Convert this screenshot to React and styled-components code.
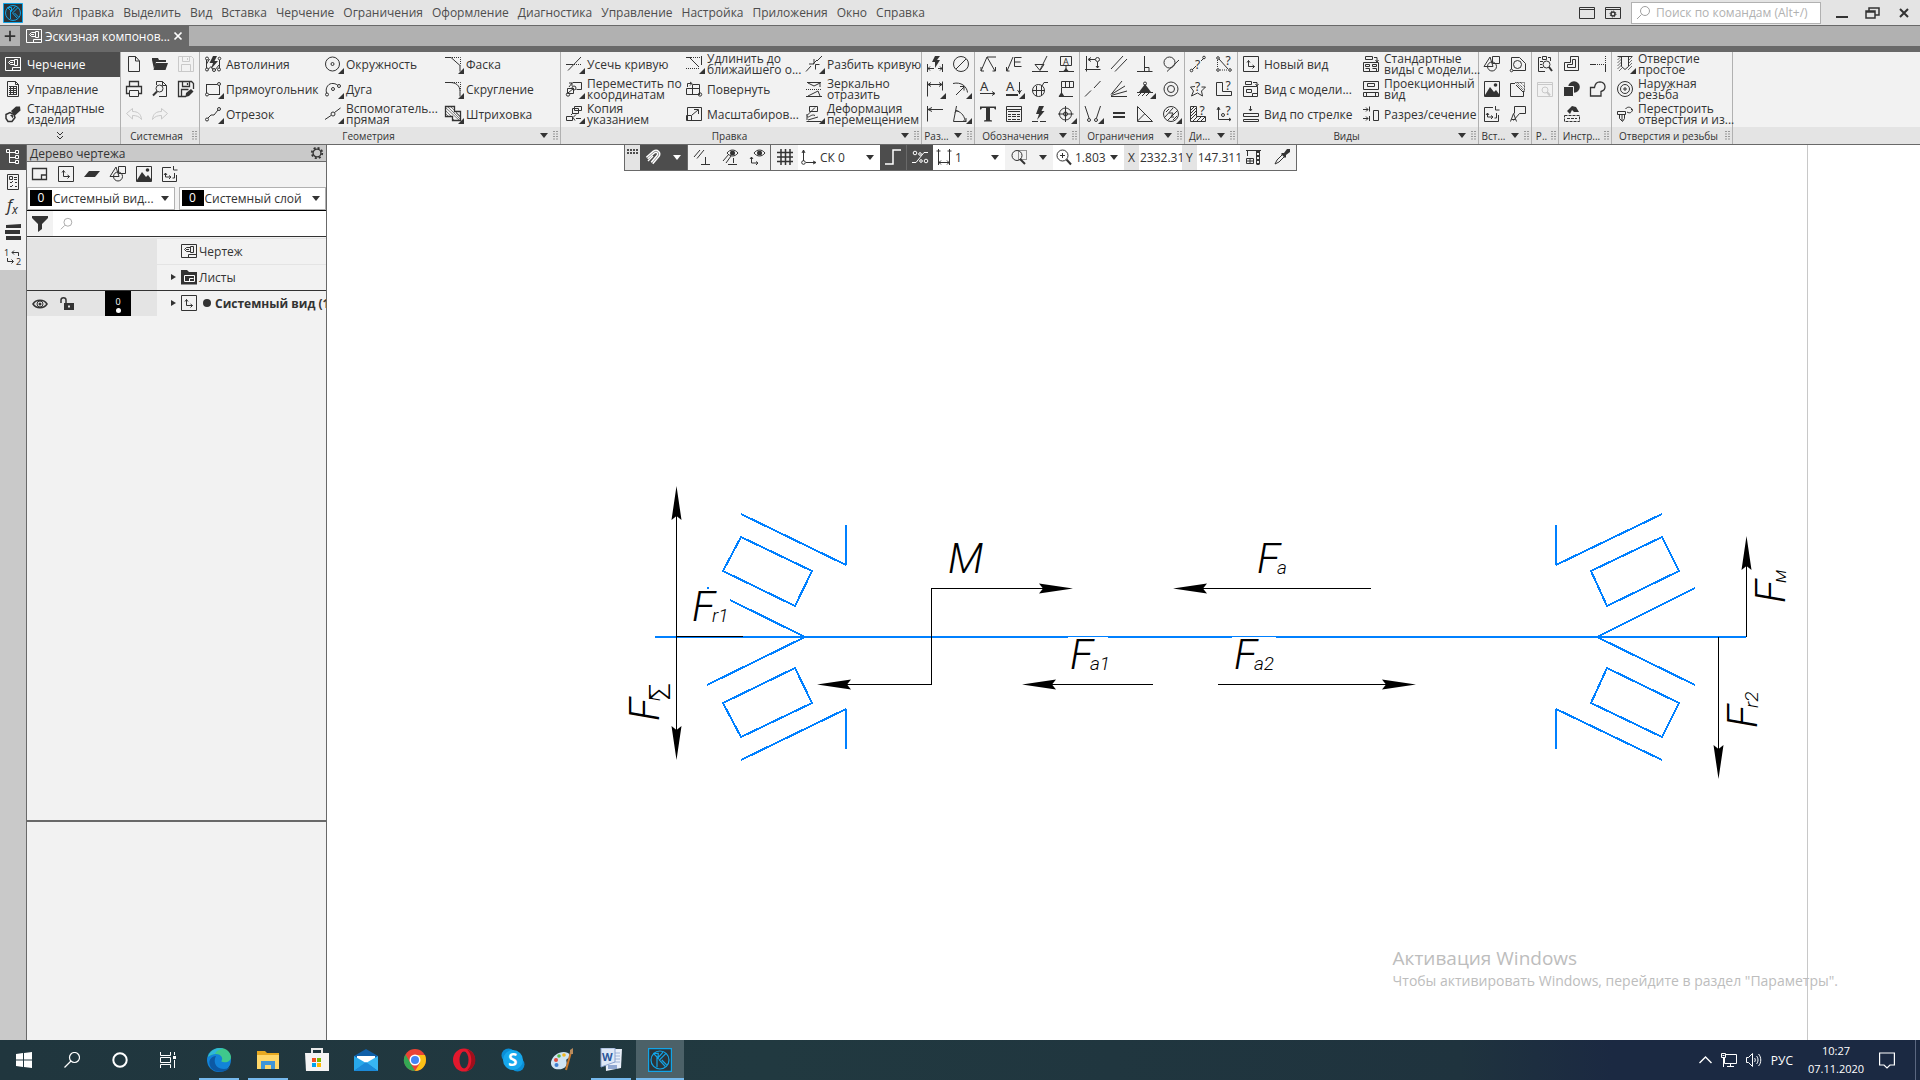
import { useState } from 'react';
import styled, { createGlobalStyle, css } from 'styled-components';

const solid = { fill: 'currentColor', stroke: 'none' };
const dash = { strokeDasharray: '1 1' };
const glyph = { fill: 'currentColor', stroke: 'none', fontFamily: 'Noto Sans, sans-serif' };

const icons = {
  drawing: (
    <>
      <path d="M.5 1.500h15v13H.5zM7.500 14.500v-3h8M9.500 3.500h3v6h-3zM9.500 4.500h-4l-2 2 2 2h4" />
      <path d="M5 6.500h3" />
    </>
  ),
  manage: (
    <>
      <path d="M2.500.5h8l3 3v12h-11zM10.500.5v3h3" />
      <path d="M4 5.500h8M4 7.500h8M4 9.500h8M4 11.500h8M4 13.500h8M5.500 5v9M8.500 5v9M11.500 5v9" />
    </>
  ),
  bolt: (
    <>
      <path strokeWidth="1.500" d="M1 8.500l4-2 4 2 1 3-3 4h-4l-2-3z" />
      <path {...solid} d="M6 5l5-4.500 4 0 .5 4-6 5.500-2-3zM5 9.500l2-1 1.500 1.500-1 2.500-1-2z" />
    </>
  ),
  newFile: <path d="M2.500.5h7l4 4.500v10.500h-11zM9.500.5v4.500h4" />,
  open: (
    <>
      <path {...solid} d="M0 2h6l1 2h7v2H4l-2 7-2-9z" />
      <path {...solid} d="M3.500 7H16l-2.500 7H1.500z" />
    </>
  ),
  save: <path d="M.5.5h13l2 2v13H.5zM4.500.5v5h7v-5M9.500 2v2M3.500 15.500v-7h9v7" />,
  print: (
    <>
      <path strokeWidth="1.300" d="M3.500 5V.5h9V5M3.500 12.500h-3v-7h15v7h-3" />
      <path d="M3.500 9.500h9v6h-9z" />
    </>
  ),
  preview: (
    <>
      <path d="M4.500 4V.5h6l4 4v11H7M10.500.5v4h4" />
      <circle cx="7.500" cy="7.500" r="3.500" />
      <path strokeWidth="2" d="M5 10.500l-4 4" />
    </>
  ),
  saveAs: (
    <>
      <path strokeWidth="1.300" d="M8 15.500H.5V.5h13l2 2V8M4.500.5v5h7v-5M9.500 2v2M3.500 15.500v-7h7" />
      <path {...solid} d="M8 12l5-4 2.500 2.500L11 15l-3.500 1z" />
    </>
  ),
  undo: <path d="M6.500 2.500v3c5 0 8.500 2 9 8-2-3-5-4-9-4v3.500L.5 7.500z" />,
  redo: <path d="M9.500 2.500v3c-5 0-8.500 2-9 8 2-3 5-4 9-4v3.500l6-5.500z" />,
  autoLine: (
    <>
      <path d="M1.500 4v8M1.500 8l3-5M3 13.500l3-3 2 3M14.500 4v8M10 14l4-5" />
      <circle cx="2" cy="2.500" r="1.500" />
      <circle cx="2" cy="13.500" r="1.500" />
      <circle cx="14" cy="13.500" r="1.500" />
      <circle cx="9" cy="14" r="1.500" />
      <circle cx="14.500" cy="2.500" r="1.300" />
      <path {...solid} d="M8 0h4L9.500 5H13l-7 8 2-6H4.500z" />
    </>
  ),
  rect: (
    <>
      <path d="M1 3.500h11M1.500 4v8M14.500 5v9M4 13.500h10" />
      <circle cx="14" cy="3" r="1.500" />
      <circle cx="2" cy="13.500" r="1.500" />
    </>
  ),
  segment: (
    <>
      <path d="M3 12l3-3h3l4-5" />
      <circle cx="14" cy="3" r="1.500" />
      <circle cx="2" cy="13.500" r="1.500" />
    </>
  ),
  circle: (
    <>
      <circle cx="7.500" cy="8" r="7" />
      <circle cx="7.500" cy="8" r="1.500" />
    </>
  ),
  arc: (
    <>
      <path d="M1.500 12C0 6 4 2 8 2.500c3 0 4 1.500 5 2" />
      <circle cx="8" cy="8" r="1.500" />
      <circle cx="2" cy="13.500" r="1.500" />
      <circle cx="14" cy="5" r="1.500" />
    </>
  ),
  auxLine: (
    <>
      <path d="M0 13.500l6-4M9.500 6.500L15.500 2" />
      <circle cx="8" cy="8" r="2" />
    </>
  ),
  chamfer: (
    <>
      <path d="M0 1.500h6l9 8v6" />
      <path {...dash} d="M7 1.500h8.500v8" />
    </>
  ),
  fillet: (
    <>
      <path d="M0 1.500h5c6 0 10 3 10 9v5" />
      <path {...dash} d="M7 1.500h8.500v8" />
    </>
  ),
  hatch: (
    <>
      <path strokeWidth="1.300" d="M.5.500h9v5h6v9h-8v-4h-7z" />
      <path strokeWidth=".6" d="M1 2l13 12M1 5l5 5M3 1l12 12M6 1l9 9M1 8l2 2M8 13l1 1M11 7l4 4" />
    </>
  ),
  trim: (
    <>
      <path d="M0 8.500h7M2 14.500L15 1" />
      <path {...dash} d="M8 8.500h8" />
    </>
  ),
  moveBy: (
    <>
      <path d="M6.500 1.500h9v7h-5M1.500 7.500h6v5h-6zM2 12l6-5M3 6l3-4M3 2h3v3" />
      <circle cx="2" cy="13.500" r="1.700" />
      <circle cx="8" cy="7" r="2" />
    </>
  ),
  copyBy: <path d="M8.500.500h7v4h-7zM6.500 2.500h6v5h-6zM.5 10.500h6v4h-6zM5 9l2-2M9 14.500l-2-3 3-3M10 12.500h5" />,
  extend: (
    <>
      <path d="M0 1.500h5M15.500 0v9M4 2l9 9" />
      <path {...dash} d="M5 1.500h10M0 12.500h13" />
    </>
  ),
  rotate: (
    <>
      <path d="M6.500 3.500h7v10h-7zM.5 7.500h13v6H.5M.5 7.500v6M1.500 6v-3.500h4M4 1l2 1.500-2 2" />
      <circle cx="14" cy="13.500" r="1.700" />
    </>
  ),
  scale: (
    <>
      <path d="M1.500 1.500h14v13h-14z" />
      <path d="M.5 9.500h5v5h-5zM6 9l6-5M8 3.500h4.500v4.500" />
    </>
  ),
  split: <path d="M0 15.500L5 10M11 5l5-5M3 8h5M8 3v5M7 8l4-4M9.500 13.500v-5h4" />,
  mirror: (
    <>
      <path d="M1 1.500h14M0 15.500h16M2 2l6 3 6-3v4M2 15l10-5 2 5" />
      <path {...dash} d="M0 8.500h16" />
    </>
  ),
  deform: (
    <>
      <path d="M3.500.5h8v5h-8zM1 9.500l8-8M1 10.500c2 2 4-3 8-1M.5 15.500h15M2 14l10-3" />
      <path d="M1 8v6" />
    </>
  ),
  autoDim: (
    <>
      <path d="M.5 8v8M15.500 8v8M1 12.500h6M11 12.500h4M3 10.500l-2 2 2 2M13 10.500l2 2-2 2" />
      <path {...solid} d="M8 0h5l-3 4h3l-5 8 0-6H5z" />
    </>
  ),
  diameter: (
    <>
      <circle cx="8" cy="8" r="7.500" />
      <path d="M3 13L13 3" />
    </>
  ),
  linearDim: <path d="M.5.500v15M15.500.500v9M1 3.500h14M4 1.500l-3 2 3 2M12 1.500l3 2-3 2" />,
  radialDim: <path d="M0 2.500c8-2 14 3 14.500 9M3 14l8-8M7 5.500h4v4" />,
  baseDim: <path d="M.5 0v15.500M1 3.500h15M5 1.500l-4 2 4 2" />,
  angleDim: <path d="M3.500 0L.5 15.500h13M3 5c4 0 8 4 9 9M2 6.500l1-2 3 1M13 12v3h-3" />,
  leader: <path d="M1 15l6-14h9M7 1l8 14M1 11v4h3M15.500 11v4h-3" />,
  leaderE: <path d="M1 15l6-14M.5 11v4h3M8.500 1.500h7M8.500 6h6M8.500 10.500h7M8.500 1.500v9" />,
  rough: <path d="M0 15.500h16M3 8.500h9l-4 6-5-6M8 14l7-14" />,
  datum: (
    <>
      <path d="M2.500.5h11v9h-11zM8 9.500v5M1 15.500h15" />
      <path {...solid} d="M8 12l3 3.500H5z" />
      <text {...glyph} x="5" y="8.500" fontSize="9">A</text>
    </>
  ),
  viewA: (
    <>
      <text {...glyph} x="0" y="10" fontSize="13">A</text>
      <path d="M0 12.500h15M12 10.500l3 2-3 2" />
    </>
  ),
  sectionA: (
    <>
      <text {...glyph} x="0" y="10" fontSize="13">A</text>
      <path strokeWidth="2" d="M0 14h12" />
      <path d="M13.500 1v12M11.500 9l2 3 2-3" />
    </>
  ),
  detail: (
    <>
      <circle cx="6.500" cy="9.500" r="6" />
      <path d="M4.500 5v10M9.500 5v10M0 9.500h13M10 5l2-3.500h4" />
    </>
  ),
  tolFrame: (
    <>
      <path d="M3.500.500h12v6h-12zM7.500 1v6M11.500 1v6M3.500 7v8M1 15.500h14" />
      <path {...solid} d="M3.500 11l3 4.500h-6z" />
    </>
  ),
  text: <path {...solid} d="M0 .500h16v3h-1l-1-1.500h-4v12l2 .500v1H4v-1l2-.500V2H2L1 3.500H0z" />,
  table: <path d="M.5.500h15v15H.5zM.5 3.500h15M2 5.500h12M2 8.500h3M6 8.500h4M11 8.500h3M2 10.500h3M6 10.500h4M11 10.500h3M2 13.500h3M6 13.500h4M11 13.500h3" />,
  autoMark: (
    <>
      <path {...solid} d="M7 0h5L9.500 5h3L5 14l2-6H4z" />
      <path strokeDasharray="6 2" d="M0 15.500h16" />
    </>
  ),
  center: (
    <>
      <circle cx="7.500" cy="8" r="6" />
      <circle cx="7.500" cy="8" r="2" />
      <path d="M7.500 0v16M0 8h15.500" />
    </>
  ),
  alignPt: (
    <>
      <path d="M1.500 0v15.500M0 13.500h15.500M4 3.500h6M6 1.500l-3 2 3 2M12.500 6v6M11 10l1.500 2 1.500-2" />
      <circle cx="12.500" cy="3.500" r="2" />
    </>
  ),
  parallel: <path d="M0 13L12 0M4 15.500L16 3" />,
  perp: <path d="M7.500 0v15M0 15.500h15.500M8 11.500h4v4" />,
  tangent: (
    <>
      <circle cx="6.500" cy="6.500" r="5.500" />
      <path d="M4 15.500L16 4" />
    </>
  ),
  collinear: <path d="M0 15.500l6-6M9 7l6.500-7" />,
  angleC: <path d="M0 15.500h16M0 14.500L16 10M0 13.500L11 0M1 13l13-8" />,
  fix: (
    <>
      <circle cx="8" cy="2.500" r="1.500" />
      <path {...solid} d="M8 3l6 8H2z" />
      <path d="M0 11.500h16M1 15l3-3M5 15l3-3M9 15l3-3" />
    </>
  ),
  concentric: (
    <>
      <circle cx="8" cy="8" r="7" />
      <circle cx="8" cy="8" r="3.500" />
    </>
  ),
  symmetry: (
    <>
      <path d="M0 0l4 12M15.500 0l-4 12" />
      <circle cx="4" cy="14" r="1.500" />
      <circle cx="11" cy="14" r="1.500" />
    </>
  ),
  equal: <path strokeWidth="2" d="M2 7h12M2 11h12" />,
  triangle: <path d="M.5.500v15h15zM.5 15l7-7" />,
  equalR: (
    <>
      <circle cx="8" cy="8" r="7.500" />
      <path d="M2 11l8-9M5 14l9-9M3 6l3-3M10 14l4-4M6 7l4 0-2 4 3 0" />
    </>
  ),
  dist: (
    <>
      <path d="M2 14l4-4M11 5l3-3" />
      <circle cx="1.500" cy="14.500" r="1.300" />
      <circle cx="14" cy="1.500" r="1.300" />
      <text {...glyph} x="5" y="12.500" fontSize="12">?</text>
    </>
  ),
  nodes: (
    <>
      <path {...dash} d="M1.500 4v8M4 14h8" />
      <path d="M3 3l9 10" />
      <circle cx="2" cy="2" r="1.300" />
      <circle cx="2" cy="14" r="1.300" />
      <circle cx="14" cy="14" r="1.300" />
      <text {...glyph} x="9.500" y="9" fontSize="12">?</text>
    </>
  ),
  starQ: (
    <>
      <path d="M5 5.500L.5 6l3 4-2 5 6-3 5 3-1-5 4-4h-4" />
      <text {...glyph} x="5" y="10" fontSize="12">?</text>
    </>
  ),
  areaQ: (
    <>
      <path d="M.5 1.500h6v9h9v4H.5z" />
      <text {...glyph} x="9.500" y="9" fontSize="12">?</text>
    </>
  ),
  massQ: (
    <>
      <path d="M.5.500h6v10h9v5H.5zM1 4l3-3M1 7l5-5M1 10l5-5M1 13l5-5M3 15l4-4M7 15l4-4M11 15l4-4" />
      <text {...glyph} x="9.500" y="9" fontSize="12">?</text>
    </>
  ),
  inertiaQ: (
    <>
      <path d="M2.500 1v12.500H15M1 4l1.500-3L4 4M13 12l2 1.500-2 1.500" />
      <circle cx="7" cy="9" r="1.500" />
      <text {...glyph} x="9.500" y="9" fontSize="12">?</text>
    </>
  ),
  view: <path d="M.5.500h15v15H.5zM5.500 4.500v6h6M4 6.500l1.500-2 1.500 2M9.500 9l2 1.500-2 2" />,
  modelView: <path d="M2.500.5h6v3h-6zM.5 5.500h14v10H.5zM3.500 8.500h5v3h-5zM9.500 15.500v-3h5M10 1.500h4v3M12.500 3l1.500 2 1.500-2" />,
  arrowView: <path d="M7.500 0v5M6 3l1.500 2L9 3M.5 7.500h15v3H.5zM.5 13.500h15v2H.5z" />,
  stdViews: <path d="M2.500.5h7v3h-7zM.5 6.500h15v9H.5zM2.500 8.500h4v2h-4zM9.500 8.500h4v2h-4zM2.500 12.500h4v3M9.500 12.500h4v3M11 1.500h3v4M12.500 4l1.500 2 1.500-2" />,
  projView: <path d="M.5.500h15v8H.5zM4.500 2.500h7v3h-7zM.5 11.500h15v4H.5zM3.500 11v4M12.500 11v4" />,
  cutView: <path d="M0 3.500h5M3 1.500l2 2-2 2M6.500.5v5M0 12.500h5M3 10.500l2 2-2 2M6.500 10v5M10.500 4.500h5v10h-5z" />,
  shapes: (
    <>
      <path d="M8.500.500h7v7h-7zM0 10.500L6 1l3 9.500z" />
      <circle cx="8" cy="10.500" r="4.500" />
    </>
  ),
  fragment: (
    <>
      <path d="M1.500 13V1.500h8l6 6v7H3" />
      <circle cx="7.500" cy="8.500" r="4" />
      <circle cx="1.500" cy="14.500" r="1.300" />
    </>
  ),
  image: (
    <>
      <path d="M.5.500h15v15H.5z" />
      <path {...solid} d="M1 14l5-8 4 5 2-2 3 4v2H1z" />
      <circle {...solid} cx="11.500" cy="4" r="1.800" />
    </>
  ),
  imageClip: (
    <>
      <path d="M5 2.500H.5v13h13V10M6 4l7 7" />
      <path {...dash} d="M5.500 1.500h9v9zM7 1l8 8M10 1l5 5" />
    </>
  ),
  docView: <path d="M9 1.500H.5v14h14V9M11.500 0v4h4M3.500 7v4h5M2 9l1.500-2L5 9M7 9.500l2 1.500-2 2M12.500 7v5h-2" />,
  callout: <path d="M4.500.5h11v7h-6l-6 7M4.500 7.500v-7M.5 15.500l3-8 3 8M1.500 13.500h4" />,
  report: (
    <>
      <path d="M4 1.500H1.500v14H8M11 1.500h2.500V5M5.500.5h4v3h-4zM3 5.500h3M3 8.500h2M3 11.500h3" />
      <circle cx="9.500" cy="8.500" r="3.500" />
      <path strokeWidth="2" d="M12 11l3 4" />
    </>
  ),
  findWin: (
    <>
      <path d="M.5 1.500h15v14H.5zM.5 3.500h15" />
      <circle cx="8" cy="9" r="3" />
      <path strokeWidth="2" d="M10 11l3 3.500" />
    </>
  ),
  contour: <path d="M6.500.5h8v14h-14v-8h6zM8.500 3.500h3v8h-8v-3h5z" />,
  limit: (
    <>
      <path d="M0 8.500h6M15.500 8v8" />
      <path {...dash} d="M7 8.500h8M15.500 0v8" />
    </>
  ),
  boolAdd: (
    <>
      <circle {...solid} cx="10" cy="6" r="5.800" />
      <path {...solid} stroke="#f2f2f2" d="M-.5 5.500h10v10H-.5z" />
    </>
  ),
  boolMerge: <path strokeWidth="1.300" d="M.5 15v-8.500h4C5 3 7 .8 10 .8c6 .5 7 8.200 1 9.700v4.500z" />,
  measure: (
    <>
      <path {...solid} d="M3 5l5-5 4 1 3 5-5 0-2-2-2 4z" />
      <path strokeDasharray="3 1" d="M.5 9.500h15v6H.5zM3 12.500h10" />
    </>
  ),
  hole: (
    <>
      <path d="M4.500.5h7v10l-3.500 3-3.500-3zM.5.500h15" />
      <path strokeWidth=".7" d="M.5 4l3-3M.5 7l4-4M.5 10l4-4M.5 13l4-4M2 15l3-3M12 4l3-3M12 7l3-3M12 10l3-3M11 14l4-4" />
    </>
  ),
  thread: (
    <>
      <circle cx="8" cy="8" r="7.500" />
      <circle cx="8" cy="8" r="4.500" />
      <path d="M6 8h4M8 6v4" />
    </>
  ),
  rebuild: <path d="M.5 5.500h8v3h-8zM2.500 8.500v4l3 3 2-3v-4M5 9v6M8.500 3c2-3 6-2 7 1M10 6c3 2 5 0 5.500-2M14 3l1.500 1.500" />,
  layout: <path strokeWidth="1.300" d="M.5 2.500h14v11H.5zM9.500 13v-4h5" />,
  layer: <path {...solid} d="M5 5h11l-5 6H0z" />,
  treeIcon: (
    <>
      <path d="M4.500 3v11M5 3.500h5M5 8.500h5M5 13.500h5" />
      <path d="M1.500.5h3v3h-3zM10.500 1.500h3v3h-3zM10.500 6.500h3v3h-3zM10.500 11.500h3v3h-3z" />
    </>
  ),
  params: <path d="M2.500.500h11v15h-11zM4.500 2.500h3v3h-3zM5 8l1 1 2-2M5 12l1 1 2-2M9 3.500h3M9 5.500h3M10 8.500h2M10 12.500h2" />,
  fx: (
    <text fill="currentColor" stroke="none" fontFamily="Noto Sans, sans-serif" fontStyle="italic" fontSize="16" x="2" y="12">
      f<tspan fontSize="12" dy="3">x</tspan>
    </text>
  ),
  bars: <path {...solid} d="M1 1l15-1v4L1 4zM0 6h15v4H0zM1 12h15v4H1z" />,
  swap: (
    <>
      <text {...glyph} x="-1" y="7" fontSize="9">1</text>
      <text {...glyph} x="11" y="16" fontSize="9">2</text>
      <path d="M13.500 7V3.500H7M9 1.500l-2 2 2 2M2.500 9v3.500H8M6.500 10.500l2 2-2 2" />
    </>
  ),
  funnel: <path {...solid} d="M0 0h16v2l-6 6v5l-4 3V8L0 2z" />,
  search: (
    <>
      <circle cx="9" cy="6" r="4.500" />
      <path d="M5.500 9.500L1 14" />
    </>
  ),
  sheets: (
    <>
      <path {...solid} d="M0 1h6l2 2h8v12.500H0z" />
      <path stroke="#fff" d="M3.500 6.500h10v6h-10zM8.500 9.500h4M8.500 9.500v3" />
    </>
  ),
  eye: (
    <>
      <path strokeWidth="1.500" d="M1 8c3-5 11-5 14 0-3 5-11 5-14 0z" />
      <circle cx="8" cy="8" r="3" />
      <circle {...solid} cx="8" cy="8" r="1.500" />
    </>
  ),
  unlock: (
    <>
      <path strokeWidth="1.500" d="M2 7V4c0-3 5-3 5 0v4" />
      <path {...solid} fillRule="evenodd" d="M5 7h10v7H5zM9 9.500v2h2v-2z" />
    </>
  ),
  gear: (
    <>
      <circle cx="8" cy="8" r="4.500" strokeWidth="1.500" />
      <circle cx="8" cy="8" r="6" strokeWidth="2" strokeDasharray="2.400 2.300" />
    </>
  ),
  magnet: (
    <>
      <path strokeWidth="3.500" d="M2 9l7-6c3-2 6 1 4 4l-6 7" />
      <path stroke="#777" strokeWidth=".8" d="M2 9l7-6c3-2 6 1 4 4l-6 7" />
      <path strokeWidth="1.500" d="M3 12l5-5" />
    </>
  ),
  snapPerp: <path d="M0 8l6-7M3 9.500L10 1M11.500 8v7M7 15.500h9" />,
  snapEye: (
    <>
      <path d="M1 12l6-7M4 14l5-7M11.500 9v5M6 15.500h9M5 4c3-4 8-4 11 0-3 4-8 4-11 0z" />
      <circle {...solid} cx="10.500" cy="4" r="2.500" />
    </>
  ),
  axesEye: (
    <>
      <path d="M2.500 8v6h6M1 10l1.500-2L4 10M7 12.500l2 1.500-2 2M5 4c3-4 8-4 11 0-3 4-8 4-11 0z" />
      <circle {...solid} cx="10.500" cy="4" r="2.500" />
    </>
  ),
  grid: <path strokeWidth="1.500" d="M4 0v16M8.500 0v16M13 0v16M0 3.500h16M0 8h16M0 12.500h16" />,
  axes: (
    <>
      <path d="M2.500 12V1M5 13.500h10M1 4l1.500-3L4 4M12 12l3 1.500-3 1.500" />
      <circle cx="2.500" cy="13.500" r="1.800" />
    </>
  ),
  step: <path strokeWidth="1.500" d="M0 15h8V1h8" />,
  nodeSnap: (
    <>
      <path d="M0 13.500h4l8-10h4" />
      <circle cx="3" cy="4" r="1.800" />
      <circle cx="8" cy="5" r="1.300" />
      <circle cx="9" cy="12" r="1.300" />
      <circle cx="14" cy="12" r="1.800" />
    </>
  ),
  stepDim: <path d="M2.500 4v12M13.500 4v12M3 13.500h10M5 11.500l-2 2 2 2M11 11.500l2 2-2 2M2.500 0v4M.5 2h4M13.500 0v4M11.500 2h4" />,
  zoomArea: (
    <>
      <path {...dash} d="M7.500 1.500h8v9h-8z" />
      <circle cx="6" cy="6.500" r="5" />
      <path strokeWidth="2" d="M9 10l5 5" />
    </>
  ),
  zoomIn: (
    <>
      <circle cx="6.500" cy="6.500" r="5.500" />
      <path strokeWidth="2" d="M10.500 10.500l4.500 5" />
      <path d="M4 6.500h5M6.500 4v5" />
    </>
  ),
  coords: (
    <>
      <path d="M0 1.500h15M1.500 2v5M10.500 2v13.500M13.500 2v13.500M.5 9.500h7v5h-7zM.5 12h7M4 9.500v5" />
      <path strokeWidth="2" strokeDasharray="2 2" d="M12 2v14" />
    </>
  ),
  pipette: (
    <>
      <path d="M1 15l2-4 6-6 2 2-6 6z" />
      <path {...solid} d="M8 4l2 0 3-4 3 0 0 3-4 3 0 2-1 1-4-4z" />
    </>
  ),
  windowBox: <path d="M.5 2.500h15v11H.5zM1 4.500h14" />,
  windowGear: (
    <>
      <path d="M.5 2.500h15v11H.5zM1 4.500h14" />
      <circle cx="8" cy="9" r="2" strokeWidth="1.500" />
      <circle cx="8" cy="9" r="3" strokeDasharray="1 1.350" />
    </>
  ),
  minimize: <path strokeWidth="2" d="M2 12h12" />,
  restore: <path strokeWidth="1.500" d="M1 6h9v7H1zM4 6V3h10v7h-4M1 7h9" />,
  close: <path strokeWidth="2" d="M4 4l8 8M12 4l-8 8" />,
  plus: <path strokeWidth="2" d="M8 2v12M2 8h12" />,
  more: <path d="M5 4l3 3 3-3M5 8l3 3 3-3" />,
};

const Icon = ({ name, size = 16 }) => (
  <Svg width={size} height={size} viewBox="0 0 16 16" aria-hidden="true">
    {icons[name]}
  </Svg>
);

const Grip = () => (
  <svg width="5" height="9" viewBox="0 0 5 9" aria-hidden="true">
    <path d="M1 0v9M4 0v9" stroke="#4d4d4d" strokeWidth="1" strokeDasharray="1 1.500" />
  </svg>
);

const menu = [
  'Файл', 'Правка', 'Выделить', 'Вид', 'Вставка', 'Черчение', 'Ограничения', 'Оформление',
  'Диагностика', 'Управление', 'Настройка', 'Приложения', 'Окно', 'Справка',
];

const modes = [
  { icon: 'drawing', text: 'Черчение' },
  { icon: 'manage', text: 'Управление' },
  { icon: 'bolt', text: 'Стандартные изделия' },
];

// tools go column by column, three in each: [icon, label, has submenu, disabled]
const groups = [
  {
    title: 'Системная',
    tools: [
      ['newFile'], ['print'], ['undo', '', 0, 1],
      ['open'], ['preview'], ['redo', '', 0, 1],
      ['save', '', 0, 1], ['saveAs'],
    ],
  },
  {
    title: 'Геометрия', wide: true, more: true,
    tools: [
      ['autoLine', 'Автолиния'], ['rect', 'Прямоугольник', 1], ['segment', 'Отрезок', 1],
      ['circle', 'Окружность', 1], ['arc', 'Дуга', 1], ['auxLine', 'Вспомогатель...\nпрямая', 1],
      ['chamfer', 'Фаска', 1], ['fillet', 'Скругление', 1], ['hatch', 'Штриховка', 1],
    ],
  },
  {
    title: 'Правка', wide: true, more: true,
    tools: [
      ['trim', 'Усечь кривую', 1], ['moveBy', 'Переместить по\nкоординатам', 1], ['copyBy', 'Копия\nуказанием', 1],
      ['extend', 'Удлинить до\nближайшего о...', 1], ['rotate', 'Повернуть'], ['scale', 'Масштабиров...'],
      ['split', 'Разбить кривую', 1], ['mirror', 'Зеркально\nотразить'], ['deform', 'Деформация\nперемещением', 1],
    ],
  },
  {
    title: 'Раз...', more: true,
    tools: [['autoDim'], ['linearDim', '', 1], ['baseDim'], ['diameter'], ['radialDim', '', 1], ['angleDim', '', 1]],
  },
  {
    title: 'Обозначения', more: true,
    tools: [
      ['leader'], ['viewA'], ['text'], ['leaderE'], ['sectionA', '', 1], ['table'],
      ['rough'], ['detail'], ['autoMark'], ['datum'], ['tolFrame'], ['center', '', 1],
    ],
  },
  {
    title: 'Ограничения', more: true,
    tools: [
      ['alignPt'], ['collinear'], ['symmetry', '', 1], ['parallel'], ['angleC'], ['equal'],
      ['perp'], ['fix', '', 1], ['triangle'], ['tangent'], ['concentric'], ['equalR', '', 1],
    ],
  },
  {
    title: 'Ди...', more: true,
    tools: [['dist'], ['starQ'], ['massQ'], ['nodes'], ['areaQ'], ['inertiaQ']],
  },
  {
    title: 'Виды', wide: true, more: true,
    tools: [
      ['view', 'Новый вид'], ['modelView', 'Вид с модели...'], ['arrowView', 'Вид по стрелке'],
      ['stdViews', 'Стандартные\nвиды с модели...'], ['projView', 'Проекционный\nвид'], ['cutView', 'Разрез/сечение'],
    ],
  },
  {
    title: 'Вст...', more: true,
    tools: [['shapes'], ['image'], ['docView'], ['fragment'], ['imageClip'], ['callout']],
  },
  { title: 'Р..', tools: [['report'], ['findWin', '', 0, 1]] },
  { title: 'Инстр...', tools: [['contour'], ['boolAdd'], ['measure'], ['limit'], ['boolMerge']] },
  {
    title: 'Отверстия и резьбы', wide: true,
    tools: [['hole', 'Отверстие\nпростое', 1], ['thread', 'Наружная\nрезьба'], ['rebuild', 'Перестроить\nотверстия и из...']],
  },
];

const head = { up: -90, down: 90, left: 180, right: 0 };

const Arrow = ({ x, y, dir }) => (
  <path d="M0 0L-34-5l4 5-4 5z" transform={`translate(${x} ${y}) rotate(${head[dir]})`} fill="#000" stroke="none" />
);

const Force = ({ x, y, name = 'F', sub, turned }) => (
  <Label transform={`translate(${x} ${y})${turned ? ' rotate(-90)' : ''}`}>
    {name}
    {sub && <Sub dx="-3" dy="1">{sub}</Sub>}
  </Label>
);

const Drawing = () => (
  <Sheet viewBox="327 145 1593 895" preserveAspectRatio="xMinYMin meet" role="img" aria-label="Эскизная компоновка">
    <path d="M1807.500 145v895" stroke="#c8c8c8" />
    <g stroke="#0080ff" strokeWidth="2" strokeLinejoin="bevel" shapeRendering="crispEdges">
      <path d="M655 637H1746" />
      <path d="M741 514l105 51V525M741 537l71 34-17 35-72-35zM730 600l75 37-98 48M707 588h2" />
      <path d="M741 760l105-51v40M741 737l71-34-17-35-72 35z" />
      <path d="M1662 514l-106 51V525M1662 537l17 34-72 35-16-35zM1695 588l-98 49 98 48" />
      <path d="M1662 760l-106-51v40M1662 737l17-34-72-35-16 35z" />
    </g>
    <path d="M1068 637.500h40M1232 637.500h44" stroke="#fff" />
    <g stroke="#000" shapeRendering="crispEdges">
      <path d="M676.500 500v246M676 636.500h67M932 684.500h-90M931.500 685V588.500H1050M1040 684.500h113" />
      <path d="M1190 588.500h181M1218 684.500h180M1746.500 637V560M1718.500 637v120" />
    </g>
    <Arrow x={676.5} y={486} dir="up" />
    <Arrow x={676.5} y={760} dir="down" />
    <Arrow x={1073} y={588.5} dir="right" />
    <Arrow x={817} y={684.5} dir="left" />
    <Arrow x={1022} y={684.5} dir="left" />
    <Arrow x={1173} y={588.5} dir="left" />
    <Arrow x={1416} y={684.5} dir="right" />
    <Arrow x={1746.5} y={536} dir="up" />
    <Arrow x={1718.5} y={779} dir="down" />
    <Force x={692} y={621} sub="r1" />
    <Force x={948} y={573} name="M" />
    <Force x={1070} y={669} sub="a1" />
    <Force x={1257} y={573} sub="a" />
    <Force x={1234} y={669} sub="a2" />
    <Force x={659} y={721} sub="r" turned />
    <Sigma transform="translate(670 700) rotate(-90)">Σ</Sigma>
    <Force x={1785} y={603} sub="м" turned />
    <Force x={1757} y={728} sub="r2" turned />
  </Sheet>
);

const KompasLogo = ({ size }) => (
  <svg width={size} height={size} viewBox="0 0 20 20" aria-hidden="true">
    <path d="M.5.500h19v19H.5z" fill="#2b3338" stroke="#12a5e8" />
    <g fill="none" stroke="#12a5e8">
      <circle cx="10" cy="10" r="7.500" />
      <path d="M4.500 4.500h4v4l-4-4M7.500 16V8M15 4.500L9.500 10l5 5.500M12.500 3.500L8.500 8M11.500 10l4 4" />
    </g>
  </svg>
);

const apps = [
  {
    name: 'Edge', running: true,
    art: (
      <>
        <circle cx="12" cy="12" r="12" fill="#1283d8" />
        <path d="M1 9C3 2 9 0 13 0c7 0 11 5 11 9 0 4-4 6-8 5-2 0-2-1-1-2 1-3-2-6-6-6-4 0-7 2-8 3z" fill="#3fc88c" />
        <path d="M1 9C4 1 12-1 17 1 12 1 9 3 8 6 5 6 2 7 1 9z" fill="#2fb7dc" />
        <path d="M9 8c-3 5-1 13 8 13 3 0 4-1 6-2-4 6-13 6-18 2C1 17 1 9 9 8z" fill="#0c59a4" />
      </>
    ),
  },
  {
    name: 'Проводник', running: true,
    art: (
      <>
        <path d="M1 3h8l2 2h12v15H1z" fill="#e7a921" />
        <path d="M1 7h22v14H1z" fill="#ffd769" />
        <path d="M5 13h14v8h-4v-4H9v4H5z" fill="#3f95d8" />
      </>
    ),
  },
  {
    name: 'Магазин',
    art: (
      <>
        <path d="M7 6V1h10v5" fill="none" stroke="#e8e8e8" strokeWidth="2" />
        <path d="M0 5h24v18H1z" fill="#f4f4f4" />
        <path d="M7 10h4v4H7z" fill="#f25022" />
        <path d="M12 10h4v4h-4z" fill="#7fba00" />
        <path d="M7 15h4v4H7z" fill="#00a4ef" />
        <path d="M12 15h4v4h-4z" fill="#ffb900" />
      </>
    ),
  },
  {
    name: 'Почта',
    art: (
      <>
        <path d="M0 8l12-7 12 7v15H0z" fill="#0f5fa8" />
        <path d="M3 8h18v7H3z" fill="#fff" />
        <path d="M0 8l12 7-12 8z" fill="#28a8ea" />
        <path d="M24 8L12 15l12 8z" fill="#37b6f2" />
        <path d="M0 23l12-9 12 9z" fill="#1b8ad8" />
      </>
    ),
  },
  {
    name: 'Chrome',
    art: (
      <>
        <circle cx="12" cy="12" r="11" fill="#ea4335" />
        <path d="M2.500 6.500L8 16l4 7C3 23-2 14 2.500 6.500z" fill="#34a853" />
        <path d="M12 7h10c3 7-1 16-10 16l5-8z" fill="#fbc116" />
        <circle cx="12" cy="12" r="5.500" fill="#fff" />
        <circle cx="12" cy="12" r="4" fill="#4285f4" />
      </>
    ),
  },
  {
    name: 'Opera',
    art: (
      <>
        <ellipse cx="12" cy="12" rx="11" ry="11.500" fill="#e3182d" />
        <path d="M14 1c13 3 12 20 0 22 7-4 7-18 0-22z" fill="#a00f1c" />
        <ellipse cx="12" cy="12" rx="4.500" ry="8.500" fill="#20363e" />
      </>
    ),
  },
  {
    name: 'Skype',
    art: (
      <>
        <circle cx="7.500" cy="7.500" r="7" fill="#0a8ed6" />
        <circle cx="16.500" cy="16.500" r="7" fill="#0a8ed6" />
        <circle cx="12" cy="12" r="10" fill="#16a7ec" />
        <text x="7" y="18" fontSize="17" fontWeight="700" fontFamily="Open Sans, sans-serif" fill="#fff">S</text>
      </>
    ),
  },
  {
    name: 'Paint',
    art: (
      <>
        <path d="M1 14C3 6 12 2 18 5c3 2 2 5-1 6-2 1 1 4-1 7-3 5-16 5-15-4z" fill="#cfe3f2" />
        <circle cx="6" cy="12" r="2" fill="#e04b3c" />
        <circle cx="9" cy="8" r="1.800" fill="#58b947" />
        <circle cx="14" cy="7" r="1.800" fill="#f3b61f" />
        <circle cx="6.500" cy="17" r="2" fill="#3f7fd0" />
        <path d="M21 4l-5 18" stroke="#c9762a" strokeWidth="2" />
        <path d="M20 6l0-4 3-2 0 6z" fill="#b98b5c" />
      </>
    ),
  },
  {
    name: 'Word', running: true,
    art: (
      <>
        <path d="M6 1h17l-1 19-15 3z" fill="#e9eff9" />
        <path d="M16 5h5M16 8h5M15 11h6M15 14h6" stroke="#9db3d6" />
        <path d="M9 18h9M9 20h9" stroke="#3a62a8" />
        <path d="M2 0h14v14L2 19z" fill="#dfe8f6" stroke="#8aa3cf" />
        <text x="3" y="13" fontSize="11" fontWeight="700" fontFamily="Open Sans, sans-serif" fill="#2b579a">W</text>
      </>
    ),
  },
];

const App = () => {
  const [mode, setMode] = useState(0);
  const [query, setQuery] = useState('');
  const [filter, setFilter] = useState('');

  return (
    <Screen>
      <GlobalStyle />
      <MenuBar>
        <KompasLogo size={20} />
        <MenuList>
          {menu.map(item => (
            <MenuButton key={item}>{item}</MenuButton>
          ))}
        </MenuList>
        <WindowTool aria-label="Окно"><Icon name="windowBox" /></WindowTool>
        <WindowTool aria-label="Вид интерфейса"><Icon name="windowGear" /></WindowTool>
        <CommandSearch>
          <Icon name="search" />
          <input
            aria-label="Поиск по командам"
            placeholder="Поиск по командам (Alt+/)"
            value={query}
            onChange={e => setQuery(e.target.value)}
          />
        </CommandSearch>
        <WindowButtons>
          <WindowTool aria-label="Свернуть"><Icon name="minimize" /></WindowTool>
          <WindowTool aria-label="Развернуть"><Icon name="restore" /></WindowTool>
          <WindowTool aria-label="Закрыть"><Icon name="close" /></WindowTool>
        </WindowButtons>
      </MenuBar>

      <TabBar>
        <NewTab aria-label="Новый документ"><Icon name="plus" size={14} /></NewTab>
        <Tab>
          <Icon name="drawing" />
          <span>Эскизная компонов...</span>
          <TabClose aria-label="Закрыть вкладку"><Icon name="close" size={14} /></TabClose>
        </Tab>
      </TabBar>

      <Ribbon>
        <Modes>
          {modes.map((m, i) => (
            <ModeButton key={m.text} $active={mode === i} onClick={() => setMode(i)}>
              <Icon name={m.icon} />
              <ModeText>{m.text}</ModeText>
            </ModeButton>
          ))}
          <MoreButton aria-label="Ещё"><Icon name="more" /></MoreButton>
        </Modes>
        {groups.map(group => (
          <Group key={group.title}>
            <Tools $wide={group.wide}>
              {group.tools.map(([icon, text, sub, off]) => (
                <Tool key={icon} aria-label={text || icon} $off={off}>
                  <ToolIcon $sub={sub}><Icon name={icon} /></ToolIcon>
                  {text && <span>{text}</span>}
                </Tool>
              ))}
            </Tools>
            <GroupTitle>
              <GroupName>{group.title}</GroupName>
              {group.more && <GroupMore aria-label="Ещё команды"><Caret /></GroupMore>}
              <Grip />
            </GroupTitle>
          </Group>
        ))}
      </Ribbon>

      <Workspace>
        <SideBar>
          {['treeIcon', 'params', 'fx', 'bars', 'swap'].map((name, i) => (
            <SideButton key={name} aria-label={name} $active={i === 0}><Icon name={name} /></SideButton>
          ))}
        </SideBar>

        <Panel>
          <PanelHeader>
            Дерево чертежа
            <PlainButton aria-label="Настройка панели"><Icon name="gear" size={14} /></PlainButton>
          </PanelHeader>
          <PanelTools>
            {['layout', 'view', 'layer', 'shapes', 'image', 'docView'].map(name => (
              <PlainButton key={name} aria-label={name}><Icon name={name} /></PlainButton>
            ))}
          </PanelTools>
          <Pickers>
            <Picker>
              <Badge>0</Badge>
              <select aria-label="Вид"><option>Системный вид...</option></select>
              <Caret />
            </Picker>
            <Picker>
              <Badge>0</Badge>
              <select aria-label="Слой"><option>Системный слой</option></select>
              <Caret />
            </Picker>
          </Pickers>
          <FilterRow>
            <FilterButton aria-label="Фильтр"><Icon name="funnel" /></FilterButton>
            <FilterField>
              <Icon name="search" size={14} />
              <input aria-label="Поиск в дереве" value={filter} onChange={e => setFilter(e.target.value)} />
            </FilterField>
          </FilterRow>
          <Tree>
            <TreeRow>
              <TreeState />
              <TreeItem><Icon name="drawing" />Чертеж</TreeItem>
            </TreeRow>
            <TreeRow>
              <TreeState />
              <TreeItem $branch><Icon name="sheets" />Листы</TreeItem>
            </TreeRow>
            <TreeRow $current>
              <TreeState>
                <Icon name="eye" />
                <Icon name="unlock" />
                <LayerCell>0<i /></LayerCell>
              </TreeState>
              <TreeItem $branch $bold><Icon name="view" /><Dot />Системный вид (1:1</TreeItem>
            </TreeRow>
          </Tree>
          <PanelBottom />
        </Panel>

        <Canvas>
          <Drawing />
          <QuickBar>
            <QuickGrip>
              <svg width="11" height="6" viewBox="0 0 11 6" aria-hidden="true">
                <path d="M0 1h11M0 4h11" stroke="#4d4d4d" strokeWidth="2" strokeDasharray="2 1" />
              </svg>
            </QuickGrip>
            <QuickGroup $tone="dark">
              <QuickButton aria-label="Привязки" $w={26}><Icon name="magnet" /></QuickButton>
              <QuickButton aria-label="Список привязок" $w={21}><Caret /></QuickButton>
            </QuickGroup>
            <QuickGroup $line>
              <QuickButton aria-label="Перпендикуляр" $w={28}><Icon name="snapPerp" /></QuickButton>
              <QuickButton aria-label="Показать ограничения" $w={27}><Icon name="snapEye" /></QuickButton>
              <QuickButton aria-label="Показать степени свободы" $w={27}><Icon name="axesEye" /></QuickButton>
            </QuickGroup>
            <QuickGroup $line>
              <QuickButton aria-label="Сетка" $w={27}><Icon name="grid" /></QuickButton>
            </QuickGroup>
            <QuickSelect $w={82}>
              <Icon name="axes" />
              <select aria-label="Система координат"><option>СК 0</option></select>
              <Caret />
            </QuickSelect>
            <QuickGroup $tone="dark">
              <QuickButton aria-label="Ортогональное черчение" $w={26}><Icon name="step" /></QuickButton>
            </QuickGroup>
            <QuickGroup $tone="dark" $line>
              <QuickButton aria-label="Округление" $w={26}><Icon name="nodeSnap" /></QuickButton>
            </QuickGroup>
            <QuickSelect $w={72}>
              <Icon name="stepDim" />
              <select aria-label="Шаг курсора"><option>1</option></select>
              <Caret />
            </QuickSelect>
            <QuickGroup>
              <QuickButton aria-label="Показать рамкой" $w={27}><Icon name="zoomArea" /></QuickButton>
              <QuickButton aria-label="Масштаб" $w={21}><Caret /></QuickButton>
            </QuickGroup>
            <QuickSelect $w={71}>
              <Icon name="zoomIn" />
              <input aria-label="Текущий масштаб" defaultValue="1.803" />
              <Caret />
            </QuickSelect>
            <Coord>X<input defaultValue="2332.316" /></Coord>
            <Coord>Y<input defaultValue="147.3119" /></Coord>
            <QuickGroup>
              <QuickButton aria-label="Панель координат" $w={28}><Icon name="coords" /></QuickButton>
              <QuickButton aria-label="Копировать свойства" $w={28}><Icon name="pipette" /></QuickButton>
            </QuickGroup>
          </QuickBar>
          <Watermark>
            <h2>Активация Windows</h2>
            <p>Чтобы активировать Windows, перейдите в раздел "Параметры".</p>
          </Watermark>
        </Canvas>
      </Workspace>

      <TaskBar>
        <SystemButton aria-label="Пуск">
          <svg width="16" height="16" viewBox="0 0 16 16" fill="#fff">
            <path d="M0 2l7-1v6.500H0zM8 1l8-1v7.500H8zM0 8.500h7V15l-7-1zM8 8.500h8V16l-8-1z" />
          </svg>
        </SystemButton>
        <SystemButton aria-label="Поиск">
          <svg width="16" height="16" viewBox="0 0 16 16" fill="none" stroke="#fff" strokeWidth="1.200">
            <circle cx="10.500" cy="5.500" r="5" />
            <path d="M7 9l-6.500 6.500" />
          </svg>
        </SystemButton>
        <SystemButton aria-label="Кортана">
          <svg width="16" height="16" viewBox="0 0 16 16" fill="none" stroke="#fff" strokeWidth="2">
            <circle cx="8" cy="8" r="6.700" />
          </svg>
        </SystemButton>
        <SystemButton aria-label="Представление задач">
          <svg width="16" height="16" viewBox="0 0 16 16" fill="none" stroke="#fff">
            <path d="M.5 0v3.500h10V0M.5 5.500h10v5H.5zM.5 16v-3.500h10V16M14.500 0v3M14.500 8v8" />
            <path d="M13 4h3v3h-3z" fill="#fff" stroke="none" />
          </svg>
        </SystemButton>
        <AppList>
          {apps.map(app => (
            <AppButton key={app.name} aria-label={app.name} $running={app.running}>
              <svg width="24" height="24" viewBox="0 0 24 24">{app.art}</svg>
            </AppButton>
          ))}
          <AppButton aria-label="КОМПАС" $running $active><KompasLogo size={24} /></AppButton>
        </AppList>
        <Tray>
          <svg width="13" height="8" viewBox="0 0 13 8" fill="none" stroke="#fff" strokeWidth="1.400">
            <path d="M.5 7l6-6 6 6" />
          </svg>
          <svg width="16" height="16" viewBox="0 0 16 16" fill="none" stroke="#fff">
            <path d="M5 2.500h10.500v9H3.500V6M6 14.500h7M9.500 12v2M.5 1.500h4v4h-4zM2.500 5v10M1.500 3.500h2" />
          </svg>
          <svg width="16" height="16" viewBox="0 0 16 16" fill="none" stroke="#fff">
            <path d="M.5 5.500h2l4-4v13l-4-4h-2zM8.500 6c1 1 1 3 0 4M10.500 4c2 2 2 6 0 8M12.500 2c3 3 3 9 0 12" />
          </svg>
          <span>РУС</span>
          <Clock>
            <time>10:27</time>
            <time>07.11.2020</time>
          </Clock>
          <svg width="16" height="17" viewBox="0 0 16 17" fill="none" stroke="#fff" strokeWidth="1.200">
            <path d="M.6 1h14.800v12H11l-3 3-3-3H.6z" />
          </svg>
          <ShowDesktop aria-label="Свернуть все окна" />
        </Tray>
      </TaskBar>
    </Screen>
  );
};

const GlobalStyle = createGlobalStyle`
  *,
  *::before,
  *::after {
    box-sizing: border-box;
  }

  body {
    margin: 0;
    overflow: hidden;
    font-family: 'Open Sans', 'Noto Sans', sans-serif;
    font-size: 12px;
    color: #333;
  }

  button, input, select {
    margin: 0;
    padding: 0;
    border: 0;
    border-radius: 0;
    background: transparent;
    font: inherit;
    color: inherit;
    outline: none;
  }

  select {
    appearance: none;
  }

  svg {
    display: block;
    flex: none;
  }
`;

const Svg = styled.svg`
  fill: none;
  stroke: currentColor;
  stroke-width: 1;
  overflow: visible;
`;

const Screen = styled.div`
  display: flex;
  flex-direction: column;
  height: 100vh;
`;

const PlainButton = styled.button`
  display: flex;
  align-items: center;
  justify-content: center;
`;

const Caret = styled.i`
  flex: none;
  width: 0;
  height: 0;
  border: 4px solid transparent;
  border-top: 5px solid currentColor;
  border-bottom: 0;
`;

const MenuBar = styled.header`
  display: flex;
  align-items: center;
  height: 26px;
  padding-left: 3px;
  background: #e4e4e4;
  border-bottom: 1px solid #696969;
`;

const MenuList = styled.nav`
  display: flex;
  flex: 1;
  gap: 9px;
  padding-left: 9px;
`;

const MenuButton = styled.button`
  line-height: 24px;
  color: #4d4d4d;
`;

const WindowTool = styled(PlainButton)`
  width: 26px;
  height: 24px;
`;

const CommandSearch = styled.label`
  display: flex;
  align-items: center;
  gap: 4px;
  width: 190px;
  height: 22px;
  margin: 0 5px;
  padding-left: 4px;
  background: #fff;
  border: 1px solid #b1b1b1;
  color: #a0a0a0;

  input {
    flex: 1;
    min-width: 0;
  }

  input::placeholder {
    color: #b1b1b1;
  }
`;

const WindowButtons = styled.div`
  display: flex;
  gap: 5px;
  padding: 0 3px;
`;

const TabBar = styled.div`
  display: flex;
  height: 26px;
  background: #b1b1b1;
  border-bottom: 6px solid #696969;
`;

const NewTab = styled(PlainButton)`
  width: 20px;
`;

const Tab = styled.div`
  display: flex;
  align-items: center;
  gap: 3px;
  width: 169px;
  padding-left: 6px;
  background: #696969;
  color: #fff;

  span {
    flex: 1;
    min-width: 0;
    white-space: nowrap;
  }
`;

const TabClose = styled(PlainButton)`
  width: 22px;
`;

const Ribbon = styled.div`
  display: flex;
  height: 93px;
  background: linear-gradient(#f2f2f2 75px, #e4e4e4 75px);
  border-bottom: 1px solid #696969;
`;

const Modes = styled.div`
  width: 121px;
  border-right: 1px solid #b1b1b1;
`;

const ModeButton = styled.button`
  display: flex;
  align-items: center;
  gap: 6px;
  width: 100%;
  height: 25px;
  padding: 0 0 1px 5px;
  text-align: left;
  line-height: 11px;

  ${props =>
    props.$active &&
    css`
      background: #4d4d4d;
      color: #fff;
    `}
`;

const ModeText = styled.span`
  width: 80px;
`;

const MoreButton = styled(PlainButton)`
  width: 100%;
  height: 17px;
`;

const Group = styled.section`
  border-right: 1px solid #b1b1b1;
`;

const Tools = styled.div`
  display: grid;
  grid-auto-flow: column;
  grid-template-rows: repeat(3, 25px);
  grid-auto-columns: ${props => (props.$wide ? '120px' : '26px')};
`;

const Tool = styled.button`
  display: flex;
  align-items: center;
  gap: 5px;
  padding: 0 0 1px 5px;
  line-height: 11px;
  text-align: left;
  white-space: pre;
  color: ${props => (props.$off ? '#c9c9c9' : '#333')};
`;

const ToolIcon = styled.span`
  position: relative;

  ${props =>
    props.$sub &&
    css`
      &::after {
        content: '';
        position: absolute;
        right: -3px;
        bottom: -2px;
        border-left: 6px solid transparent;
        border-bottom: 6px solid #333;
      }
    `}
`;

const GroupTitle = styled.div`
  display: flex;
  align-items: center;
  gap: 2px;
  width: 0;
  min-width: 100%;
  height: 17px;
  padding: 0 2px;
  font-size: 10px;
`;

const GroupName = styled.span`
  flex: 1;
  min-width: 0;
  text-align: center;
  white-space: nowrap;
`;

const GroupMore = styled(PlainButton)`
  width: 14px;
`;

const Workspace = styled.main`
  display: flex;
  flex: 1;
  min-height: 0;
`;

const SideBar = styled.div`
  width: 27px;
  background: #c9c9c9;
  border-right: 1px solid #696969;
`;

const SideButton = styled(PlainButton)`
  width: 100%;
  height: 25px;
  padding-bottom: 1px;
  background: ${props => (props.$active ? '#4d4d4d' : '#f2f2f2')};
  color: ${props => (props.$active ? '#fff' : '#333')};
`;

const Panel = styled.aside`
  display: flex;
  flex-direction: column;
  width: 300px;
  background: #f2f2f2;
  border-right: 1px solid #696969;
`;

const PanelHeader = styled.div`
  display: flex;
  justify-content: space-between;
  align-items: center;
  height: 17px;
  padding: 0 2px 0 3px;
  background: #c9c9c9;
  border-bottom: 1px solid #696969;
`;

const PanelTools = styled.div`
  display: flex;
  gap: 10px;
  height: 25px;
  padding: 0 0 1px 5px;
`;

const Pickers = styled.div`
  display: flex;
  gap: 4px;
  height: 24px;
  border-bottom: 1px solid #000;
`;

const Picker = styled.div`
  display: flex;
  flex: 1;
  align-items: center;
  gap: 1px;
  min-width: 0;
  padding: 0 5px 1px 2px;
  background: #fff;
  border: 1px solid #b1b1b1;

  select {
    flex: 1;
    min-width: 0;
  }
`;

const Badge = styled.span`
  width: 22px;
  background: #000;
  color: #fff;
  line-height: 16px;
  text-align: center;
`;

const FilterRow = styled.div`
  display: flex;
  height: 26px;
  border-bottom: 1px solid #333;
`;

const FilterButton = styled(PlainButton)`
  width: 26px;
`;

const FilterField = styled.label`
  display: flex;
  flex: 1;
  align-items: center;
  padding-left: 7px;
  background: #fff;
  color: #a0a0a0;

  input {
    flex: 1;
    min-width: 0;
  }
`;

const Tree = styled.div`
  flex: 1;
  padding-top: 1px;
  overflow: hidden;
`;

const TreeRow = styled.div`
  display: grid;
  grid-template-columns: 130px 1fr;
  height: 26px;
  border-top: 1px solid ${props => (props.$current ? '#333' : '#e4e4e4')};
`;

const TreeState = styled.div`
  display: flex;
  align-items: center;
  gap: 11px;
  padding-left: 5px;
  background: #e4e4e4;
`;

const LayerCell = styled.span`
  display: flex;
  flex-direction: column;
  align-items: center;
  justify-content: flex-end;
  width: 26px;
  height: 25px;
  margin-left: 19px;
  padding-bottom: 3px;
  background: #000;
  color: #fff;
  font-size: 9px;
  line-height: 12px;

  i {
    width: 5px;
    height: 5px;
    border-radius: 50%;
    background: #fff;
  }
`;

const TreeItem = styled.div`
  display: flex;
  align-items: center;
  gap: 2px;
  min-width: 0;
  padding-bottom: 1px;
  overflow: hidden;
  white-space: nowrap;
  font-weight: ${props => (props.$bold ? 700 : 400)};

  &::before {
    content: '';
    flex: none;
    width: 5px;
    margin: 0 3px 0 14px;
    border: 3px solid transparent;
    border-left: 5px solid ${props => (props.$branch ? '#333' : 'transparent')};
    border-right: 0;
  }
`;

const Dot = styled.i`
  flex: none;
  width: 8px;
  height: 8px;
  margin: 0 2px 0 4px;
  border-radius: 50%;
  background: #333;
`;

const PanelBottom = styled.div`
  height: 220px;
  border-top: 2px solid #696969;
`;

const Canvas = styled.section`
  position: relative;
  flex: 1;
  min-width: 0;
  background: #fff;
`;

const Sheet = styled.svg`
  width: 100%;
  height: 100%;
  fill: none;
`;

const Label = styled.text`
  fill: #000;
  font-family: Roboto, sans-serif;
  font-size: 42px;
  font-style: italic;
  font-weight: 300;
`;

const Sub = styled.tspan`
  font-size: 19px;
`;

const Sigma = styled.text`
  fill: #000;
  font-family: Roboto, sans-serif;
  font-size: 30px;
  font-weight: 300;
`;

const QuickBar = styled.div`
  position: absolute;
  top: 0;
  left: 297px;
  display: flex;
  height: 26px;
  background: #f2f2f2;
  border: 1px solid #696969;
  border-top: 0;
`;

const QuickGrip = styled.div`
  width: 15px;
  padding: 4px 2px;
  background: #e4e4e4;
`;

const QuickGroup = styled.div`
  display: flex;
  padding-bottom: 1px;
  background: ${props => (props.$tone === 'dark' ? '#4d4d4d' : '#f2f2f2')};
  color: ${props => (props.$tone === 'dark' ? '#fff' : '#333')};
  border-left: ${props => (props.$line ? '1px solid #696969' : '0')};
`;

const QuickButton = styled(PlainButton)`
  width: ${props => props.$w}px;
`;

const QuickSelect = styled.div`
  display: flex;
  align-items: center;
  gap: 3px;
  width: ${props => props.$w}px;
  padding: 0 6px 1px 3px;
  background: #fff;

  select,
  input {
    flex: 1;
    min-width: 0;
  }
`;

const Coord = styled.label`
  display: flex;
  align-items: center;
  width: 58px;
  padding-left: 4px;
  gap: 5px;
  background: linear-gradient(90deg, #e4e4e4 15px, #fff 15px);

  input {
    width: 42px;
  }
`;

const Watermark = styled.div`
  position: absolute;
  right: 82px;
  bottom: 48px;
  color: #bdbdbd;

  h2,
  p {
    margin: 0;
    font-weight: 400;
  }

  h2 {
    font-size: 19px;
    line-height: 24px;
  }

  p {
    font-size: 14px;
    line-height: 22px;
  }
`;

const TaskBar = styled.footer`
  display: flex;
  height: 40px;
  background: linear-gradient(90deg, #20363e 0%, #213940 40%, #1f333e 76%, #1b2942 84%);
  color: #fff;
`;

const SystemButton = styled(PlainButton)`
  width: 48px;
`;

const AppList = styled.div`
  display: flex;
  flex: 1;
  gap: 1px;
  padding-left: 3px;
`;

const AppButton = styled(PlainButton)`
  width: 48px;
  background: ${props => (props.$active ? '#4c6168' : 'transparent')};
  background-image: ${props => (props.$running ? 'linear-gradient(#76b9ed, #76b9ed)' : 'none')};
  background-repeat: no-repeat;
  background-position: center bottom;
  background-size: ${props => (props.$active ? '100% 2px' : '40px 2px')};
`;

const Tray = styled.div`
  display: flex;
  align-items: center;
  gap: 9px;
`;

const Clock = styled.div`
  display: flex;
  flex-direction: column;
  width: 68px;
  font-size: 11px;
  line-height: 18px;
  text-align: center;
`;

const ShowDesktop = styled.button`
  width: 5px;
  height: 100%;
  margin-left: 11px;
  border-left: 1px solid #5b6780;
`;

export default App;
